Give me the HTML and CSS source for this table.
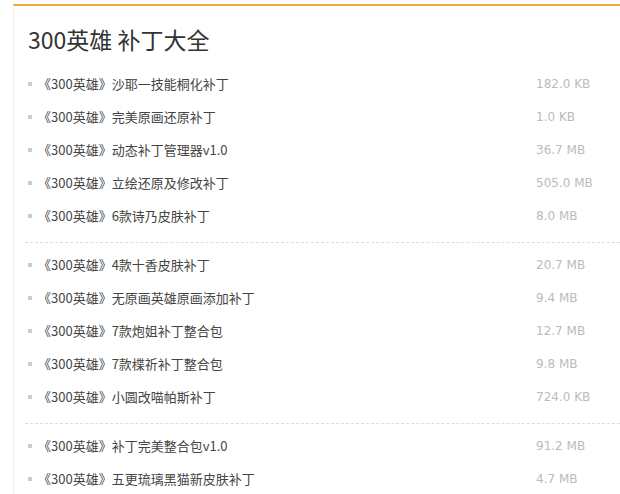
FILE: index.html
```html
<!DOCTYPE html>
<html lang="zh-CN">
<head>
    <meta charset="UTF-8">
    <title>300英雄 补丁大全</title>
    <link rel="stylesheet" href="styles.css">
</head>
<body>
    <div class="panel">
        <h2 class="panel-title">300英雄 补丁大全</h2>

        <ul class="patch-list">
            <li><span class="name">《300英雄》沙耶一技能桐化补丁</span><span class="size">182.0 KB</span></li>
            <li><span class="name">《300英雄》完美原画还原补丁</span><span class="size">1.0 KB</span></li>
            <li><span class="name">《300英雄》动态补丁管理器v1.0</span><span class="size">36.7 MB</span></li>
            <li><span class="name">《300英雄》立绘还原及修改补丁</span><span class="size">505.0 MB</span></li>
            <li><span class="name">《300英雄》6款诗乃皮肤补丁</span><span class="size">8.0 MB</span></li>
        </ul>

        <ul class="patch-list">
            <li><span class="name">《300英雄》4款十香皮肤补丁</span><span class="size">20.7 MB</span></li>
            <li><span class="name">《300英雄》无原画英雄原画添加补丁</span><span class="size">9.4 MB</span></li>
            <li><span class="name">《300英雄》7款炮姐补丁整合包</span><span class="size">12.7 MB</span></li>
            <li><span class="name">《300英雄》7款楪祈补丁整合包</span><span class="size">9.8 MB</span></li>
            <li><span class="name">《300英雄》小圆改喵帕斯补丁</span><span class="size">724.0 KB</span></li>
        </ul>

        <ul class="patch-list">
            <li><span class="name">《300英雄》补丁完美整合包v1.0</span><span class="size">91.2 MB</span></li>
            <li><span class="name">《300英雄》五更琉璃黑猫新皮肤补丁</span><span class="size">4.7 MB</span></li>
        </ul>
    </div>
</body>
</html>
```

FILE: styles.css
```css
body {
    margin: 0;
    padding: 0;
    background-color: #fff;
    font-family: "DejaVu Sans", "Noto Sans CJK SC", sans-serif;
    color: #444;
    overflow: hidden;
}

.panel {
    box-sizing: border-box;
    height: calc(100vh - 4px);
    margin: 4px 0 0 13px;
    border-top: 2px solid #f0a53c;
    border-left: 1px solid #eee;
}

.panel-title {
    margin: 0;
    padding: 18px 0 0 14px;
    font-family: "Noto Sans CJK SC", sans-serif;
    font-size: 23px;
    font-weight: normal;
    line-height: 30px;
    color: #333;
}

.patch-list {
    list-style: none;
    margin: 0 0 0 11px;
    padding: 5px 0 10px;
    border-bottom: 1px dashed #ddd;
}

.patch-list:first-of-type {
    padding-top: 13px;
}

.patch-list li {
    display: flex;
    align-items: center;
    height: 33px;
    font-size: 13px;
}

.patch-list li::before {
    content: "";
    width: 4px;
    height: 4px;
    margin: 0 6px 0 3px;
    background-color: #ccc;
}

.name {
    flex: 1;
    font-family: "Noto Sans CJK SC", sans-serif;
}

.size {
    width: 84px;
    font-size: 12px;
    color: #bbb;
}
```
